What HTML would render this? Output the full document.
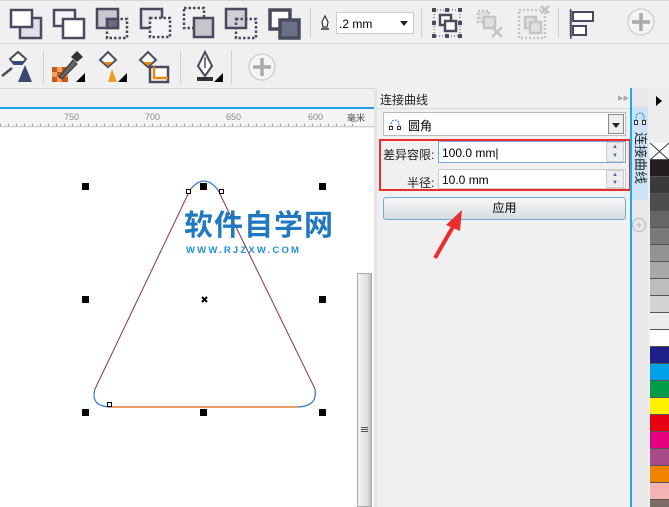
<!DOCTYPE html><html><head><meta charset="utf-8"><style>
*{margin:0;padding:0;box-sizing:border-box}
body{width:669px;height:507px;overflow:hidden;background:#f0f0f0;font-family:"Liberation Sans","Noto Sans CJK SC",sans-serif;position:relative}
.a{position:absolute}
.sep{position:absolute;width:1px;background:#d0d0d0}
.h{position:absolute;width:7px;height:7px;background:#000}
</style></head><body>
<div class="a" style="left:0;top:0;width:669px;height:1px;background:#d8d8d8"></div>
<svg class="a" style="left:0;top:0" width="669" height="88">
<g stroke="#4a4a5e" stroke-width="2.5" fill="#fff">
<g transform="translate(10,9)"><rect x="10" y="9" width="21" height="20" fill="#e0e0e8"/><rect x="1" y="1" width="21" height="17"/><rect x="10" y="17" width="11" height="0" stroke="none"/></g>
<g transform="translate(53,9)"><rect x="1" y="1" width="21" height="16" fill="#f4f4f8"/><rect x="10" y="10" width="21" height="19"/><rect x="11.5" y="11.5" width="18" height="7" fill="#fff" stroke="none"/></g>
<g transform="translate(96,8)"><rect x="1" y="1" width="21" height="19" fill="#c8c8d0"/><rect x="11" y="11" width="20" height="19" fill="none" stroke-dasharray="2.5 2"/><rect x="11" y="11" width="11" height="9" fill="#6a6a80"/></g>
<g transform="translate(140,8)"><rect x="1" y="1" width="21" height="19" fill="#e8e8ee"/><rect x="10" y="10" width="20" height="19" fill="#f4f4f8" stroke-dasharray="2.5 2"/></g>
<g transform="translate(183,7)"><rect x="1" y="1" width="20" height="20" fill="none" stroke-dasharray="2.5 2"/><rect x="11" y="11" width="19" height="19" fill="#c5c5cc"/></g>
<g transform="translate(225,8)"><rect x="1" y="1" width="20" height="19" fill="#cfcfd6"/><rect x="11" y="11" width="20" height="19" fill="none" stroke-dasharray="2.5 2"/></g>
<g transform="translate(268,8)" stroke-width="3.5"><rect x="2" y="2" width="20" height="19"/><rect x="12" y="12" width="19" height="18" fill="#6a7088"/></g>
</g>
<g transform="translate(432,8)">
<g fill="#4a4a5e"><rect x="0" y="0" width="4" height="4"/><rect x="13" y="0" width="4" height="4"/><rect x="26" y="0" width="4" height="4"/><rect x="0" y="13" width="4" height="4"/><rect x="26" y="13" width="4" height="4"/><rect x="0" y="26" width="4" height="4"/><rect x="13" y="26" width="4" height="4"/><rect x="26" y="26" width="4" height="4"/></g>
<path d="M2 2h26v26h-26z" fill="none" stroke="#4a4a5e" stroke-dasharray="1 2"/>
<rect x="8" y="7" width="11" height="10" fill="#fff" stroke="#4a4a5e" stroke-width="2.5"/><rect x="13" y="13" width="11" height="10" fill="#fff" stroke="#4a4a5e" stroke-width="2.5"/>
</g>
<g transform="translate(476,9)" stroke="#c4c4c4" stroke-width="2.5" fill="#e0e0e0">
<rect x="2" y="2" width="11" height="11" stroke-dasharray="2 2"/><rect x="8" y="8" width="11" height="11"/><path d="M16 18l10 10M26 18l-10 10" fill="none"/>
</g>
<g transform="translate(517,6)" stroke="#c4c4c4" stroke-width="2.5" fill="#e0e0e0">
<rect x="2" y="4" width="26" height="28" fill="none" stroke-dasharray="2 2"/><rect x="8" y="11" width="11" height="11"/><rect x="13" y="16" width="11" height="11"/><path d="M24 0l8 7M32 0l-8 7" fill="none"/>
</g>
<g transform="translate(570,9)">
<rect x="0" y="0" width="1.5" height="30" fill="#4a4a5e"/><rect x="0" y="2" width="1.5" height="26" fill="none" stroke="#4a4a5e" stroke-dasharray="1 1"/>
<rect x="3" y="3" width="20" height="9" fill="#fff" stroke="#4a4a5e" stroke-width="2"/><rect x="3" y="17" width="13" height="9" fill="#fff" stroke="#4a4a5e" stroke-width="2"/>
</g>
<circle cx="641" cy="22" r="13" fill="#f4f4f4" stroke="#ccc" stroke-width="1.3"/><path d="M641 13v18M632 22h18" stroke="#aaa" stroke-width="3.5"/>
<!-- row2 -->
<g transform="translate(2,50)">
<path d="M8 9l8 -7 8 7 -4 5h-8z" fill="#fff" stroke="#4a4a5e" stroke-width="2"/><path d="M9 11h14l-3 4h-8z" fill="#3a4a78"/><path d="M0 26l10 -8" stroke="#4a4a5e" stroke-width="2.5"/><path d="M16 32l7 -17 7 17z" fill="#3a4a6e"/>
</g>
<g transform="translate(52,50)">
<rect x="0" y="17" width="16" height="15" fill="#f0a060"/><rect x="0" y="17" width="5" height="5" fill="#c85a10"/><rect x="10" y="17" width="6" height="5" fill="#c85a10"/><rect x="5" y="22" width="5" height="5" fill="#c85a10"/><rect x="0" y="27" width="5" height="5" fill="#c85a10"/><rect x="10" y="27" width="6" height="5" fill="#c85a10"/>
<path d="M7 27l14 -17 4 4 -15 15z" fill="#666" stroke="#333"/><path d="M19 7l6 -6 6 6 -6 5z" fill="#333"/><path d="M24 32l9 -9v9z" fill="#000"/>
</g>
<g transform="translate(98,50)">
<path d="M2 10l8 -8 8 8 -8 7z" fill="#fff" stroke="#4a4a5e" stroke-width="2"/><path d="M5 12h10l-5 4z" fill="#e78a10"/><path d="M10 32l4 -13 5 13z" fill="#f0a020"/><path d="M20 32l9 -9v9z" fill="#000"/>
</g>
<g transform="translate(138,50)">
<path d="M2 10l8 -8 8 8 -8 7z" fill="#fff" stroke="#4a4a5e" stroke-width="2"/><path d="M5 12h10l-5 4z" fill="#e78a10"/><rect x="12" y="17" width="18" height="15" fill="#fff" stroke="#4a4a5e" stroke-width="2.5"/><path d="M16 17v11h14" fill="none" stroke="#e78a10" stroke-width="2.5"/>
</g>
<g transform="translate(195,50)">
<path d="M10 2l-7 14 7 10 7 -10z" fill="#fff" stroke="#4a4a5e" stroke-width="2"/><path d="M10 7v11" stroke="#4a4a5e" stroke-width="1.5"/><rect x="2" y="27" width="16" height="4" fill="#333"/><path d="M19 32l9 -9v9z" fill="#000"/>
</g>
<circle cx="262" cy="67" r="13" fill="#f4f4f4" stroke="#ccc" stroke-width="1.3"/><path d="M262 58v18M253 67h18" stroke="#aaa" stroke-width="3.5"/>
</svg>
<div class="sep" style="left:310px;top:8px;height:30px"></div>
<div class="sep" style="left:421px;top:8px;height:30px"></div>
<div class="sep" style="left:558px;top:8px;height:30px"></div>
<div class="sep" style="left:43px;top:50px;height:34px"></div>
<div class="sep" style="left:180px;top:50px;height:34px"></div>
<div class="sep" style="left:231px;top:50px;height:34px"></div>
<div class="a" style="left:0;top:43px;width:669px;height:1px;background:#d8d8d8"></div>
<div class="a" style="left:0;top:88px;width:669px;height:1px;background:#d4d4d4"></div>
<div class="a" style="left:336px;top:12px;width:78px;height:22px;background:#fff;border:1px solid #ccc;font-size:12px;padding:4px 2px">.2 mm<span style="position:absolute;right:5px;top:8px;border:4px solid transparent;border-top:5px solid #222"></span></div>
<svg class="a" style="left:318px;top:12px" width="14" height="22"><path d="M4 10l3 -6 3 6 -1 5h-4z" fill="#fff" stroke="#333" stroke-width="1.2"/><path d="M3 17h8" stroke="#333" stroke-width="1.5"/></svg>
<!-- ruler & canvas -->
<div class="a" style="left:0;top:107px;width:375px;height:2px;background:#1ea0e8"></div>
<div class="a" style="left:0;top:109px;width:375px;height:18px;background:#f4f4f4;border-bottom:1px solid #ccc;font-size:9px;color:#888">
<span class="a" style="left:64px;top:3px">750</span><span class="a" style="left:145px;top:3px">700</span><span class="a" style="left:226px;top:3px">650</span><span class="a" style="left:308px;top:3px">600</span><span class="a" style="left:347px;top:2px;color:#444">毫米</span>
<div class="a" style="left:0;top:15px;width:360px;height:2px;background:repeating-linear-gradient(90deg,#999 0 1px,transparent 1px 8px)"></div></div>
<div class="a" style="left:0;top:128px;width:374px;height:379px;background:#fff"></div>
<div class="a" style="left:357px;top:273px;width:15px;height:234px;background:linear-gradient(90deg,#f4f4f4,#e0e0e0 70%,#bbb);border:1px solid #aaa"></div>
<div class="a" style="left:361px;top:427px;width:7px;height:6px;background:repeating-linear-gradient(#555 0 1px,transparent 1px 2px)"></div>
<div class="a" style="left:374px;top:88px;width:3px;height:419px;background:#e4e4e4"></div>
<svg class="a" style="left:0;top:128px" width="357" height="379">
<path d="M190 62 Q204 44 218 62 L315 261 Q318 278 298 279 L110 279 Q90 278 95 261 Z" fill="none" stroke="#8a2f5a" stroke-width="1"/>
<path d="M190 62 Q204 44 218 62" stroke="#1e80e0" fill="none"/>
<path d="M110 279 L298 279" stroke="#e06010" stroke-width="1.3"/>
<path d="M95 261 Q90 278 110 279 M315 261 Q318 278 298 279" stroke="#1e80e0" fill="none"/>
<rect x="186.5" y="61.5" width="4" height="4" fill="#fff" stroke="#000"/><rect x="219.5" y="61.5" width="4" height="4" fill="#fff" stroke="#000"/><rect x="107.5" y="274.5" width="4" height="4" fill="#fff" stroke="#000"/>
<path d="M202 169l5 5M207 169l-5 5" stroke="#000" stroke-width="2"/>
</svg>
<div class="h" style="left:82px;top:183px"></div><div class="h" style="left:200px;top:183px"></div><div class="h" style="left:319px;top:183px"></div>
<div class="h" style="left:82px;top:296px"></div><div class="h" style="left:319px;top:296px"></div>
<div class="h" style="left:82px;top:409px"></div><div class="h" style="left:200px;top:409px"></div><div class="h" style="left:319px;top:409px"></div>
<div class="a" style="left:184px;top:210px;font-size:29px;font-weight:bold;color:#1f78c0;letter-spacing:1px;line-height:32px">软件自学网</div>
<div class="a" style="left:186px;top:245px;font-size:9.5px;font-weight:bold;color:#1f90d8;letter-spacing:2.2px">WWW.RJZXW.COM</div>
<!-- panel -->
<div class="a" style="left:377px;top:88px;width:253px;height:419px;background:#f0f0f0"></div>
<div class="a" style="left:380px;top:91px;font-size:12px;color:#222">连接曲线</div>
<div class="a" style="left:618px;top:91px;font-size:11px;color:#aaa">▸▸ ✕</div>
<div class="a" style="left:377px;top:108px;width:253px;height:1px;background:#ddd"></div>
<div class="a" style="left:383px;top:112px;width:243px;height:24px;background:#fff;border:1px solid #bbb;font-size:12px;padding:4px 24px"><svg class="a" style="left:4px;top:5px" width="14" height="14"><path d="M3 12V6a4 4 0 0 1 8 0v6" fill="none" stroke="#1a70c0" stroke-dasharray="2 1"/><rect x="1.5" y="8.5" width="3" height="3" fill="#fff" stroke="#333"/><rect x="9.5" y="8.5" width="3" height="3" fill="#fff" stroke="#333"/></svg>圆角
<span class="a" style="right:1px;top:1px;width:16px;height:20px;border:1px solid #888;background:#eee"><span class="a" style="left:3px;top:8px;border:4px solid transparent;border-top:5px solid #222"></span></span></div>
<div class="a" style="left:379px;top:139px;width:252px;height:52px;border:2px solid #ec2d2d"></div>
<div class="a" style="left:383px;top:146px;font-size:12px;color:#222">差异容限:</div>
<div class="a" style="left:407px;top:174px;font-size:12px;color:#222">半径:</div>
<div class="a" style="left:438px;top:141px;width:188px;height:22px;background:#fff;border:1px solid #7aa7d8;font-size:12px;padding:4px 3px">100.0 mm|</div>
<div class="a" style="left:438px;top:169px;width:188px;height:20px;background:#fff;border:1px solid #ccc;font-size:12px;padding:3px 3px">10.0 mm</div>
<div class="a" style="left:606px;top:142px;width:18px;height:20px;background:#eee;border:1px solid #ccc;font-size:6px;color:#56a;text-align:center;line-height:9px">▲<br>▼</div>
<div class="a" style="left:606px;top:170px;width:18px;height:18px;background:#eee;border:1px solid #ccc;font-size:6px;color:#56a;text-align:center;line-height:8px">▲<br>▼</div>
<div class="a" style="left:383px;top:197px;width:243px;height:23px;border:1px solid #6aaee0;border-radius:3px;background:linear-gradient(#f6f6f6,#d8dde2);font-size:12px;text-align:center;line-height:21px">应用</div>
<svg class="a" style="left:430px;top:205px" width="40" height="55"><path d="M5 53 L24 20" stroke="#ec2d2d" stroke-width="4"/><path d="M32 5 L16 20 L30 26 Z" fill="#ec2d2d"/></svg>
<!-- tab strip -->
<div class="a" style="left:630px;top:88px;width:18px;height:419px;background:#e8e8e8;border-left:2px solid #1ea8f0"></div>
<div class="a" style="left:632px;top:107px;width:16px;height:93px;background:#cde4f8"></div>
<div class="a" style="left:632px;top:132px;width:16px;height:64px;writing-mode:vertical-rl;text-orientation:sideways;font-size:13px;color:#222;line-height:16px">连接曲线</div>
<svg class="a" style="left:632px;top:110px" width="16" height="18"><path d="M4 14V7a4 4 0 0 1 8 0v7" fill="none" stroke="#1a70c0" stroke-dasharray="2 1"/><rect x="2.5" y="10.5" width="3" height="4" fill="#fff" stroke="#333"/><rect x="10.5" y="10.5" width="3" height="4" fill="#fff" stroke="#333"/></svg>
<div class="a" style="left:632px;top:218px;width:14px;height:14px;border:1px solid #bbb;border-radius:50%;color:#bbb;font-size:12px;line-height:12px;text-align:center">+</div>
<!-- palette -->
<div class="a" style="left:648px;top:88px;width:21px;height:419px;background:#ededed"></div>
<div class="a" style="left:656px;top:96px;border:5px solid transparent;border-left:6px solid #000"></div>
<div class="a" style="left:650px;top:143px;width:19px;height:364px;background:linear-gradient(#fff 0 17px,#231f20 17px 34px,#3a3a3a 34px 51px,#4d4d4d 51px 68px,#656565 68px 85px,#7a7a7a 85px 102px,#939393 102px 119px,#a8a8a8 119px 136px,#bdbdbd 136px 153px,#d4d4d4 153px 170px,#ececec 170px 187px,#fff 187px 204px,#1d2086 204px 221px,#00a0e9 221px 238px,#009b48 238px 255px,#fff100 255px 272px,#e60012 272px 289px,#e4007f 289px 306px,#a94a8a 306px 323px,#f08300 323px 340px,#f4b3b3 340px 357px,#7d6b65 357px)"></div>
<div class="a" style="left:650px;top:143px;width:19px;height:364px;background:repeating-linear-gradient(transparent 0 16px,#555 16px 17px)"></div>
<svg class="a" style="left:650px;top:143px" width="19" height="17"><path d="M0 0L19 17M19 0L0 17" stroke="#333"/></svg>
</body></html>
